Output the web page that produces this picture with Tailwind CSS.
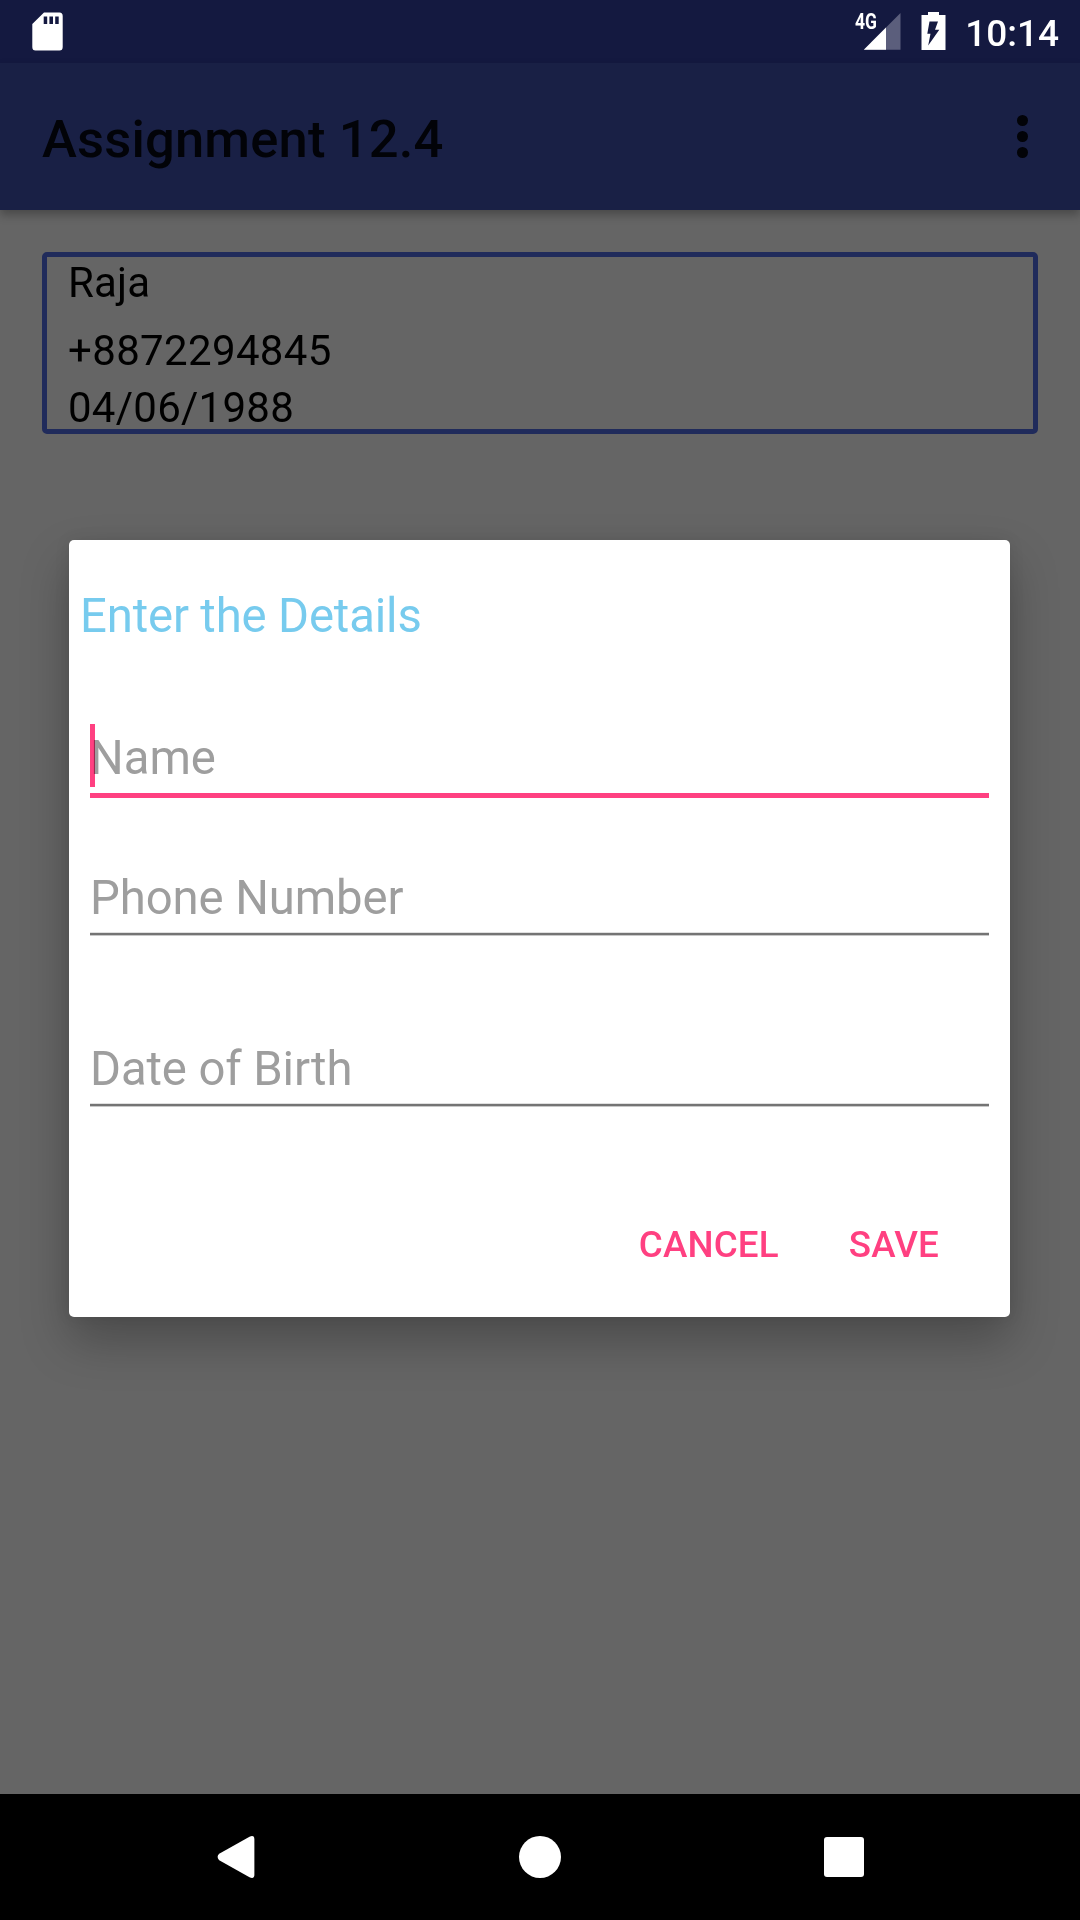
<!DOCTYPE html>
<html lang="en">
<head>
<meta charset="utf-8">
<title>Assignment 12.4</title>
<script src="https://cdn.jsdelivr.net/npm/@tailwindcss/browser@4"></script>
</head>
<body class="w-[1080px] h-[1920px] overflow-hidden bg-[#656565] font-[Roboto,sans-serif]">
<div class="relative flex h-[1920px] w-[1080px] flex-col">
  <!-- Status bar -->
  <div class="flex h-[63px] shrink-0 items-start justify-between bg-[#141940] pl-8 pr-[21px] text-white">
    <svg class="mt-3 h-[39px] w-[31px]" viewBox="0 0 31 39" fill="currentColor"><path fill-rule="evenodd" d="M12 .5H27.5Q30.7 .5 30.7 4V35Q30.7 38.6 27.5 38.6H3.500Q.3 38.600 .3 35V12ZM11.700 4.500V12H15.200V4.500ZM17.400 4.500V12H21V4.500ZM23.200 4.500V12H26.700V4.500Z"/></svg>
    <div class="flex items-start">
      <svg class="mt-1 h-[47px] w-[56px] overflow-visible" viewBox="-8 -8 56 47"><text x="1" y="17" font-family="Roboto" font-size="21.500" font-weight="700" fill="#fff" textLength="22" lengthAdjust="spacingAndGlyphs">4G</text><path d="M46.500 1V37.700H9.800Z" fill="#5b5e7c"/><path d="M32 15.500V37.700H9.800Z" fill="#fff"/></svg>
      <svg class="ml-[19px] mt-3 h-[39px] w-[25px]" viewBox="0 0 25 39" fill="currentColor"><path fill-rule="evenodd" d="M7 0H18V3H24.500V38H.500V3H7ZM8.500 9.500L6.300 21.700H9.500L7.200 33.500L18.300 17.700H14L17 9.500Z"/></svg>
      <div class="ml-[19px] text-[37px] font-medium leading-[68px]">10:14</div>
    </div>
  </div>
  <!-- Toolbar -->
  <div class="relative flex h-[147px] shrink-0 items-center justify-between bg-[#192045] pl-[42px] pr-[52px] text-[#020308] shadow-[0_5px_9px_rgba(0,0,0,0.28)]">
    <h1 class="pt-[5px] text-[52.5px] font-medium leading-[60px] tracking-[0.18px]">Assignment 12.4</h1>
    <div class="flex flex-col gap-[5px]">
      <i class="size-[11px] rounded-full bg-current"></i><i class="size-[11px] rounded-full bg-current"></i><i class="size-[11px] rounded-full bg-current"></i>
    </div>
  </div>
  <!-- Contact card -->
  <div class="mx-[42px] mt-[42px] h-[182px] shrink-0 rounded-[5px] border-5 border-[#202b5b] pl-[21px] text-[42px] text-black">
    <div class="h-[51px] leading-[51px] tracking-[0.15px]">Raja</div>
    <div class="mt-[14px] h-[57px] leading-[57px] tracking-[0.35px]">+8872294845</div>
    <div class="h-[50px] leading-[57px] tracking-[0.25px]">04/06/1988</div>
  </div>
  <div class="flex-1"></div>
  <!-- Navigation bar -->
  <div class="flex h-[126px] shrink-0 items-center bg-black pl-[217px] text-white">
    <svg class="h-[42px] w-[38px]" viewBox="0 0 38 42" fill="currentColor"><path d="M2.200 17.800L32.500 .700Q37.400-1.400 37.400 3.500V38.500Q37.400 43.400 32.500 41.300L2.200 24.200Q-1 21 2.200 17.800Z"/></svg>
    <i class="ml-[264px] size-[42px] rounded-full bg-current"></i>
    <i class="ml-[263px] size-10 rounded-[3px] bg-current"></i>
  </div>

  <!-- Dialog -->
  <div class="absolute left-[69px] top-[540px] flex h-[777px] w-[941px] flex-col rounded-[5px] bg-white pt-[49px] text-[47.25px] shadow-[0_24px_48px_rgba(0,0,0,0.26),0_0_16px_rgba(0,0,0,0.08)]">
    <h2 class="h-[54px] pl-[11px] leading-[54px] tracking-[-0.14px] text-[#77cbee]">Enter the Details</h2>
    <div class="relative mx-[21px] mt-[81px] h-[74px] border-b-5 border-[#ff4081] leading-[68px] text-[#9e9e9e]">
      <i class="absolute left-0 top-0 h-[63px] w-[5px] bg-[#ff4081]"></i>
      <span class="relative mix-blend-multiply">Name</span>
    </div>
    <div class="mx-[21px] mt-[66px] leading-[68px] tracking-[-0.08px] text-[#9e9e9e]">
      <div class="h-[68px]">Phone Number</div>
      <div class="h-1 border-b border-t border-b-[#c8c8c8] border-t-[#e0e0e0] bg-[#747474]"></div>
    </div>
    <div class="mx-[21px] mt-[99px] leading-[68px] tracking-[-0.1px] text-[#9e9e9e]">
      <div class="h-[68px]">Date of Birth</div>
      <div class="h-1 border-b border-t border-b-[#c8c8c8] border-t-[#e0e0e0] bg-[#747474]"></div>
    </div>
    <div class="mt-[105px] flex h-[66px] justify-end gap-[70px] pr-[71px] text-[36.75px] font-medium leading-[66px] tracking-[0.15px] text-[#ff4081]">
      <span>CANCEL</span><span>SAVE</span>
    </div>
  </div>
</div>
</body>
</html>
